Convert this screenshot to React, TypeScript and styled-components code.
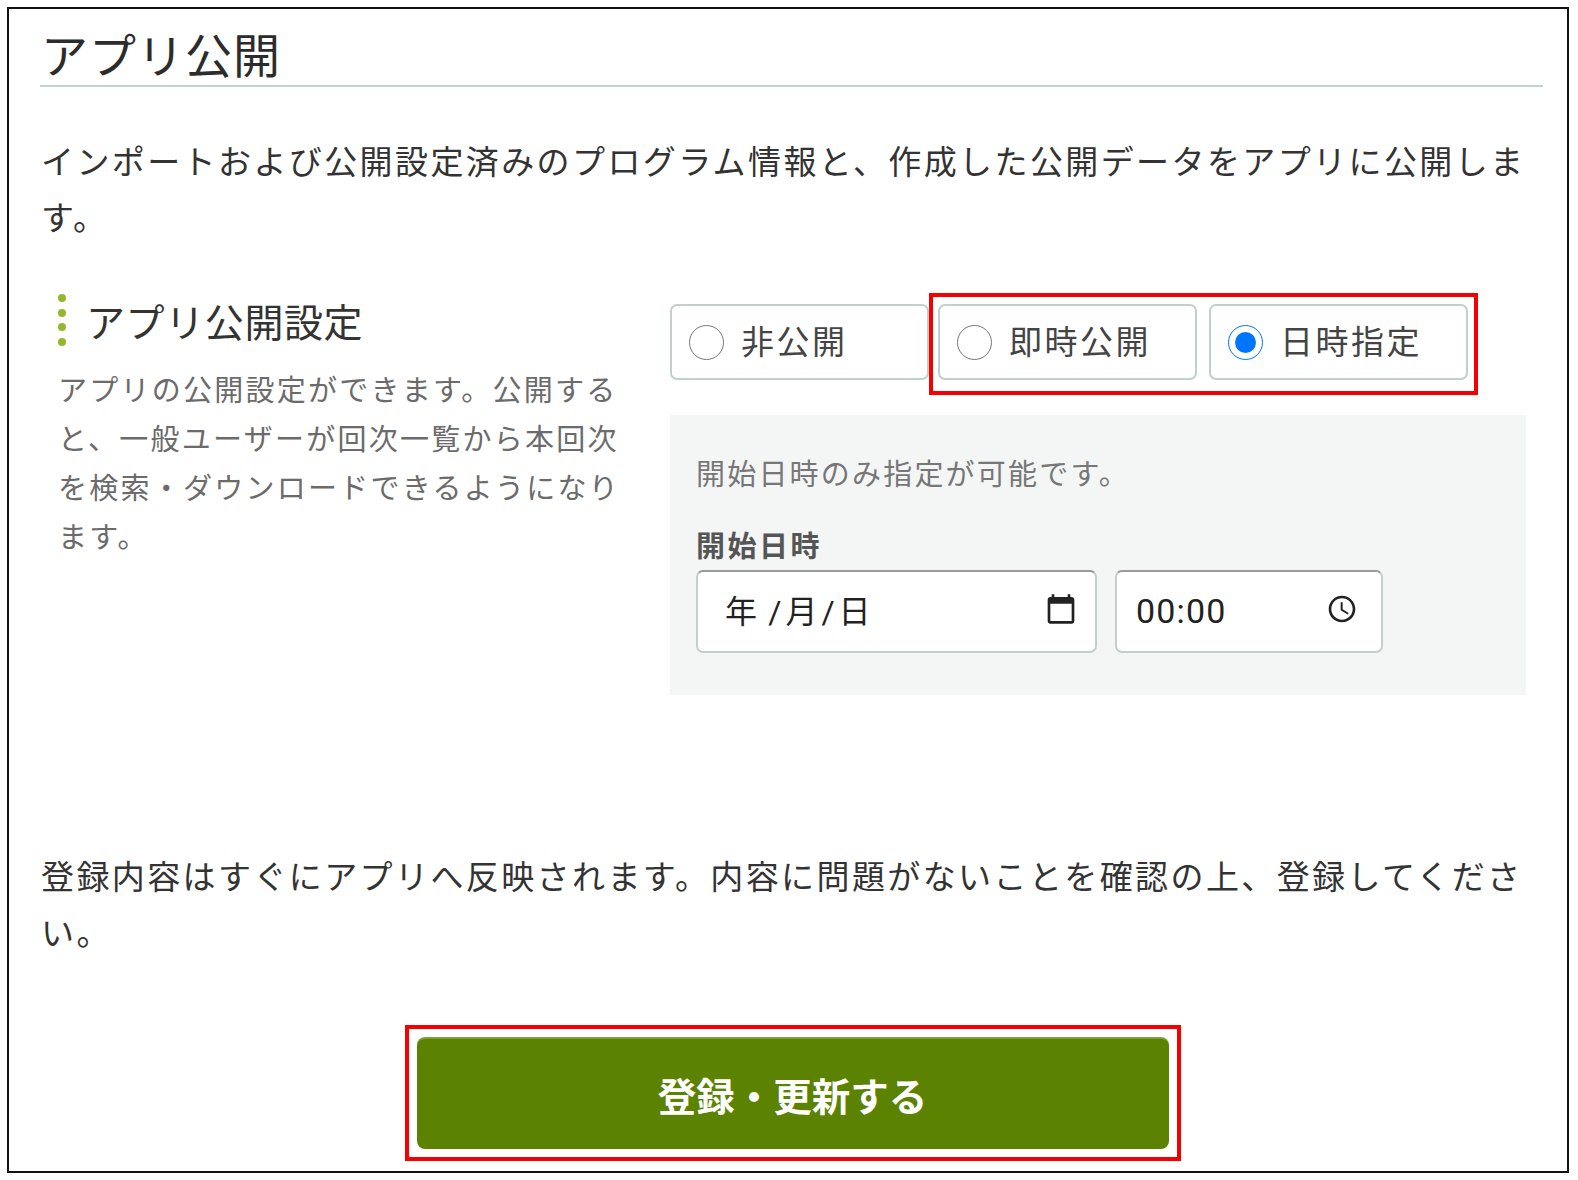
import React from "react";
import styled, { createGlobalStyle } from "styled-components";

const Global = createGlobalStyle`
  html, body { margin: 0; padding: 0; background: #fff; }
  body { font-family: "Noto Sans CJK JP", "Noto Sans", sans-serif; color: #333; }
  * { box-sizing: border-box; }
`;

const Frame = styled.div`
  margin: 7px 0 0 7px;
  width: 1562px;
  height: 1166px;
  border: 2px solid #111;
  padding: 0 24px 0 31px;
  background: #fff;
`;
const Title = styled.h1`
  margin: 0;
  padding: 18px 0 6px 1px;
  border-bottom: 2px solid #c6d2ce;
  font-size: 47px;
  line-height: 52px;
  font-weight: 400;
  letter-spacing: 1px;
  color: #2c2c2c;
`;
const Lead = styled.p<{ $top: number }>`
  margin: ${(p) => p.$top}px 0 0;
  padding-left: 1px;
  font-size: 33px;
  line-height: 56px;
  letter-spacing: 2.4px;
  color: #333;
`;
const Row = styled.div`
  margin-top: 49px;
  display: grid;
  grid-template-columns: 630px 856px;
`;
const Side = styled.div`
  padding: 1px 0 0 18px;
`;
const Heading = styled.h2`
  margin: 0;
  display: flex;
  align-items: center;
  gap: 20px;
  font-size: 39px;
  line-height: 50px;
  font-weight: 400;
  letter-spacing: 0.6px;
  color: #333;
`;
const Dots = styled.span`
  flex: none;
  display: flex;
  flex-direction: column;
  justify-content: space-between;
  height: 52px;
  width: 8px;
  & > i { display: block; width: 8px; height: 8px; border-radius: 50%; background: #93b82c; }
`;
const Desc = styled.p`
  margin: 18px 0 0;
  width: 565px;
  font-size: 29px;
  line-height: 49px;
  letter-spacing: 2.25px;
  color: #6b6b6b;
`;
const Main = styled.div`
  display: flex;
  flex-direction: column;
`;
const Choices = styled.div`
  display: flex;
  align-items: flex-start;
`;
const Highlight = styled.div`
  display: flex;
  gap: 12px;
  border: 4px solid #f40000;
  padding: 7px 6px 11px 5px;
`;
const Choice = styled.label<{ $first?: boolean }>`
  width: 259px;
  height: 76px;
  margin-top: ${(p) => (p.$first ? 11 : 0)}px;
  display: flex;
  align-items: center;
  gap: 17px;
  padding: 0 0 4px 17px;
  border: 2px solid #c2cfca;
  border-radius: 7px;
  background: #fff;
  font-size: 33px;
  letter-spacing: 2.5px;
  color: #444;
`;
const Radio = styled.input`
  flex: none;
  width: 35px;
  height: 35px;
  margin: 4px 0 0;
  accent-color: #0075ff;
`;
const Panel = styled.div`
  margin-top: 20px;
  padding: 37px 26px 42px;
  background: #f4f6f6;
`;
const Note = styled.p`
  margin: 0;
  font-size: 29px;
  line-height: 40px;
  letter-spacing: 2.2px;
  color: #777;
`;
const FieldLabel = styled.div`
  margin-top: 32px;
  font-size: 29px;
  line-height: 40px;
  font-weight: 700;
  letter-spacing: 2.5px;
  color: #555;
`;
const Fields = styled.div`
  margin-top: 6px;
  display: flex;
  gap: 18px;
`;
const Field = styled.div<{ $w: number; $pad: number; $end: number }>`
  width: ${(p) => p.$w}px;
  height: 83px;
  display: flex;
  align-items: center;
  justify-content: space-between;
  padding: 0 ${(p) => p.$end}px 5px ${(p) => p.$pad}px;
  background: #fff;
  border: 2px solid #c2cfca;
  border-top-color: #999;
  border-radius: 7px;
  font-size: 32px;
  color: #222;
  white-space: pre;
`;
const TimeText = styled.span`
  padding-top: 4px;
  font-family: "Roboto", "Noto Sans", sans-serif;
  font-size: 34px;
  letter-spacing: 1.2px;
`;
const Sep = styled.span`
  margin: 0 4px;
  font-family: "Roboto", sans-serif;
`;
const Icon = styled.svg`
  flex: none;
  width: 32px;
  height: 32px;
  fill: #222;
`;
const Actions = styled.div`
  margin-top: 66px;
  display: flex;
  justify-content: center;
  padding-left: 2px;
`;
const ActionMark = styled.div`
  width: 776px;
  border: 4px solid #f40000;
  padding: 8px 8px 8px;
`;
const Submit = styled.button`
  display: block;
  width: 100%;
  height: 112px;
  padding: 0 0 1px;
  border: 0;
  border-top: 2px solid #7f9f38;
  border-radius: 8px;
  background: #5b8200;
  color: #fff;
  font-family: inherit;
  font-size: 38.5px;
  font-weight: 700;
`;

export default function App() {
  return (
    <>
      <Global />
      <Frame>
        <Title>アプリ公開</Title>
        <Lead $top={45}>
          インポートおよび公開設定済みのプログラム情報と、作成した公開データをアプリに公開します。
        </Lead>
        <Row>
          <Side>
            <Heading>
              <Dots><i /><i /><i /><i /></Dots>
              アプリ公開設定
            </Heading>
            <Desc>
              アプリの公開設定ができます。公開すると、一般ユーザーが回次一覧から本回次を検索・ダウンロードできるようになります。
            </Desc>
          </Side>
          <Main>
            <Choices>
              <Choice $first>
                <Radio type="radio" name="pub" readOnly />
                非公開
              </Choice>
              <Highlight>
                <Choice>
                  <Radio type="radio" name="pub" readOnly />
                  即時公開
                </Choice>
                <Choice>
                  <Radio type="radio" name="pub" defaultChecked />
                  日時指定
                </Choice>
              </Highlight>
            </Choices>
            <Panel>
              <Note>開始日時のみ指定が可能です。</Note>
              <FieldLabel>開始日時</FieldLabel>
              <Fields>
                <Field $w={401} $pad={27} $end={18}>
                  <span>年 <Sep>/</Sep>月<Sep>/</Sep>日</span>
                  <Icon viewBox="0 0 24 24"><path d="M20 3h-1V1h-2v2H7V1H5v2H4c-1.1 0-2 .9-2 2v16c0 1.1.9 2 2 2h16c1.1 0 2-.9 2-2V5c0-1.1-.9-2-2-2zm0 18H4V8h16v13z" /></Icon>
                </Field>
                <Field $w={268} $pad={19} $end={23}>
                  <TimeText>00:00</TimeText>
                  <Icon viewBox="0 0 24 24"><path d="M11.99 2C6.47 2 2 6.48 2 12s4.47 10 9.99 10C17.52 22 22 17.52 22 12S17.52 2 11.99 2zM12 20c-4.42 0-8-3.58-8-8s3.58-8 8-8 8 3.58 8 8-3.58 8-8 8zm.5-13H11v6l5.25 3.15.75-1.23-4.5-2.67z" /></Icon>
                </Field>
              </Fields>
            </Panel>
          </Main>
        </Row>
        <Lead $top={152}>
          登録内容はすぐにアプリへ反映されます。内容に問題がないことを確認の上、登録してください。
        </Lead>
        <Actions>
          <ActionMark>
            <Submit type="button">登録・更新する</Submit>
          </ActionMark>
        </Actions>
      </Frame>
    </>
  );
}
